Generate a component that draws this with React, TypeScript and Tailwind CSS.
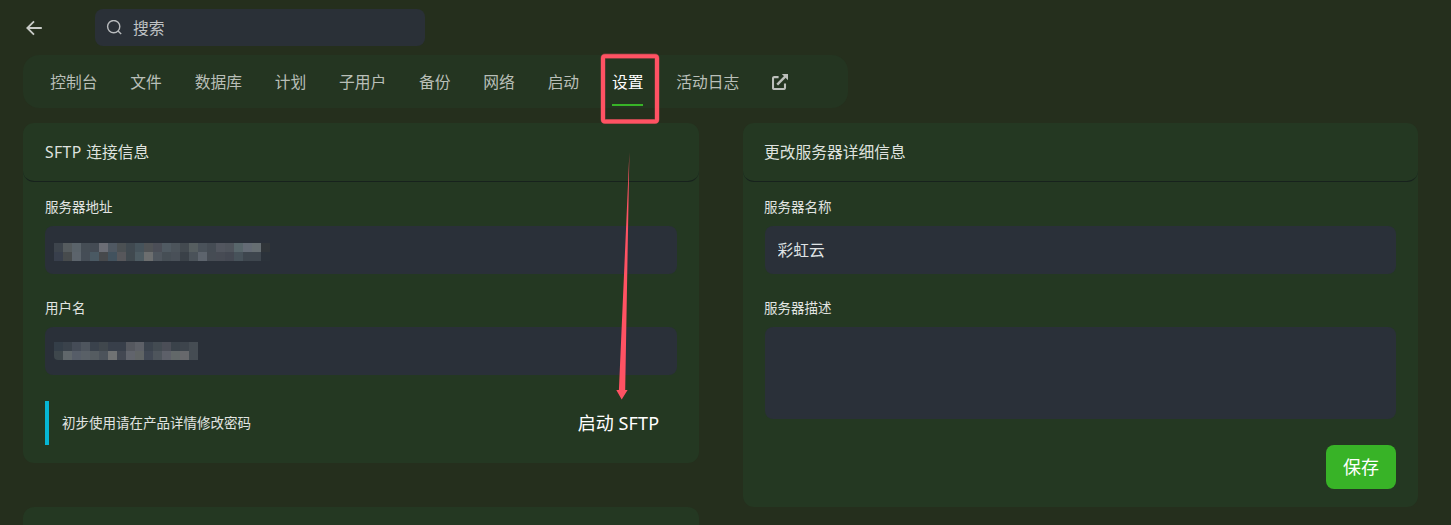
import React, { useState } from 'react';

const TABS = ['控制台', '文件', '数据库', '计划', '子用户', '备份', '网络', '启动', '设置', '活动日志'];

// Mosaic tiles covering private values, 9px each, two rows
const ADDRESS_TILES = [
  ['#3d444c', '#555b5e', '#5a636a', '#454d55', '#444b54', '#6b6d75', '#4f5862', '#4b5053', '#404950', '#46535b', '#505356', '#4b4e57', '#505a62', '#4c545b', '#434a50', '#565e60', '#4a525a', '#454c54', '#52565f', '#4f545c', '#58666b', '#646b75', '#666e72', '#303539'],
  ['#383f4c', '#474b4d', '#5c646c', '#454d56', '#4a5963', '#47494c', '#42525e', '#57575b', '#40494f', '#4d5b62', '#6c6e6f', '#4f565e', '#464e55', '#495058', '#3a4148', '#4a5259', '#5d646d', '#464c54', '#474b54', '#444852', '#47525a', '#3e464e', '#3e464e', '#2b323a'],
];
const USERNAME_TILES = [
  ['#343e48', '#3a424b', '#454c57', '#4e555e', '#3a424c', '#40474d', '#383f4a', '#383f4a', '#55585f', '#5d6067', '#3b434d', '#434b52', '#4b4e57', '#3a424a', '#3d444c', '#454c53'],
  ['#3e474c', '#60676b', '#565d68', '#596067', '#555c61', '#4c535b', '#707273', '#434852', '#61646c', '#606465', '#414854', '#4e555c', '#5d6069', '#626869', '#67686c', '#454c53'],
];

function Mosaic({ tiles, className }: { tiles: string[][]; className?: string }) {
  return (
    <div className={className}>
      {tiles.map((row, i) => (
        <div key={i} className="flex">
          {row.map((color, j) => (
            <span key={j} className="h-[9px] w-[9px]" style={{ backgroundColor: color }} />
          ))}
        </div>
      ))}
    </div>
  );
}

function Card({ title, className = '', children }: { title: React.ReactNode; className?: string; children: React.ReactNode }) {
  return (
    <section className={`rounded-[11px] bg-[#243822] ${className}`}>
      <header className="flex h-[59px] items-center rounded-[11px] border-b border-[#17221d] px-[22px] pt-0.5 text-[15.75px] text-[#dfe2df]">
        <h3>{title}</h3>
      </header>
      <div className="px-[22px] pt-[15px]">{children}</div>
    </section>
  );
}

function Label({ children }: { children: React.ReactNode }) {
  return <label className="block h-[29px] text-[13.5px] leading-5 text-[#e2e5e2]">{children}</label>;
}

function BackIcon() {
  return (
    <svg className="h-5 w-5" viewBox="0 0 20 20" fill="none" stroke="#c9ccc8" strokeWidth="1.8">
      <path d="M17.8 10H3.6M10 3.3L3.3 10L10 16.7" />
    </svg>
  );
}

function SearchIcon() {
  return (
    <svg className="h-4 w-4" viewBox="0 0 16 16" fill="none" stroke="#b9bcbe" strokeWidth="1.4">
      <circle cx="7.7" cy="6.6" r="6.1" />
      <path d="M12 10.9L15.2 14.1" />
    </svg>
  );
}

function ExternalIcon() {
  return (
    <svg className="h-4 w-4" viewBox="0 0 16 16" fill="none" stroke="#bcbfbb" strokeWidth="2.1">
      <path d="M6.6 3.1H2.2Q1 3.1 1 4.3V13.8Q1 15 2.2 15H11.8Q13 15 13 13.8V9.6" />
      <path d="M5.2 10.6L13.4 2.4" strokeWidth="2.4" />
      <path d="M9.8 0H16V6.2Z" fill="#bcbfbb" stroke="none" />
    </svg>
  );
}

// Hand-drawn style highlight: box round the tab and an arrow to the SFTP button
function Annotation() {
  return (
    <svg className="pointer-events-none absolute left-0 top-0" width="1451" height="525" fill="none">
      <rect x="603" y="56" width="54" height="65.5" rx="2" stroke="#ff5263" strokeOpacity="0.4" strokeWidth="5" />
      <rect x="603" y="56.2" width="54" height="65.3" rx="2" stroke="#ff5263" strokeWidth="4" />
      <path d="M629.4 152L625.2 390H627.6L621.7 399.5L616.3 390H618.9Z" fill="#ff5263" />
    </svg>
  );
}

export default function App() {
  const [activeTab, setActiveTab] = useState('设置');
  const [name, setName] = useState('彩虹云');
  const [description, setDescription] = useState('');

  return (
    <div className="relative h-[525px] w-[1451px] overflow-hidden bg-[#252f1d] font-['Noto_Sans','Noto_Sans_CJK_SC',sans-serif]">
      <div className="flex items-center pl-6 pt-[9px]">
        <button><BackIcon /></button>
        <div className="ml-[51px] flex h-[37px] w-[330px] items-center gap-[11px] rounded-lg bg-[#2a3037] pl-[11px] text-[15.75px] text-[#bfc2c4]">
          <SearchIcon />
          <span className="pt-0.5">搜索</span>
        </div>
      </div>

      <nav className="ml-[23px] mt-[9px] flex h-[53px] w-[825px] items-center gap-[32.8px] rounded-2xl bg-[#243521] pl-[27.3px] text-[15.75px]">
        {TABS.map(tab => (
          <button
            key={tab}
            onClick={() => setActiveTab(tab)}
            className={`h-[49px] shrink-0 border-b-2 pt-1 ${
              tab === activeTab ? 'border-[#38b327] text-white' : 'border-transparent text-[#b9bfb8]'
            }`}
          >
            {tab}
          </button>
        ))}
        <ExternalIcon />
      </nav>

      <main className="ml-[23px] mt-[15px] flex items-start gap-11">
        <div className="flex w-[676px] flex-col gap-11">
          <Card title={<><span className="tracking-[0.4px]">SFTP </span>连接信息</>} className="h-[340px]">
            <Label>服务器地址</Label>
            <div className="h-12 rounded-lg bg-[#2a3039] pl-[9px] pt-[17px]">
              <Mosaic tiles={ADDRESS_TILES} />
            </div>
            <div className="mt-6">
              <Label>用户名</Label>
              <div className="h-12 rounded-lg bg-[#2a3039] pl-[9px] pt-[15px]">
                <Mosaic tiles={USERNAME_TILES} className="overflow-hidden rounded-bl" />
              </div>
            </div>
            <div className="mt-[26px] flex h-11 items-center justify-between">
              <div className="flex h-full items-center border-l-4 border-[#06b6d4] pl-[13px] text-[13.5px] text-[#e2e5e2]">
                初步使用请在产品详情修改密码
              </div>
              <button className="px-[17.7px] text-[18px] text-white">启动 <span className="tracking-[0.2px]">SFTP</span></button>
            </div>
          </Card>
          <div className="h-24 rounded-[11px] bg-[#243822]" />
        </div>

        <Card title={<span className="-ml-px">更改服务器详细信息</span>} className="h-[384px] w-[675px]">
          <Label><span className="-ml-px">服务器名称</span></Label>
          <input
            value={name}
            onChange={e => setName(e.target.value)}
            className="block h-12 w-full rounded-lg bg-[#2a3039] px-[12.5px] pb-0.5 text-[15.75px] text-[#dfe2e4] outline-none"
          />
          <div className="mt-6">
            <Label><span className="-ml-px">服务器描述</span></Label>
            <textarea
              value={description}
              onChange={e => setDescription(e.target.value)}
              className="block h-[92px] w-full resize-none rounded-lg bg-[#2a3039] p-3 text-[15.75px] text-[#dfe2e4] outline-none"
            />
          </div>
          <div className="mt-[26px] flex justify-end">
            <button className="h-11 w-[70px] rounded-lg bg-[#38b327] text-[18px] text-white">保存</button>
          </div>
        </Card>
      </main>

      <Annotation />
    </div>
  );
}
